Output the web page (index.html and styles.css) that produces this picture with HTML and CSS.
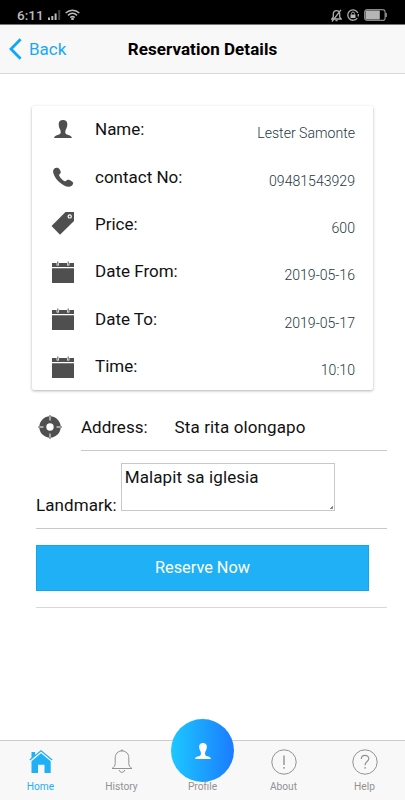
FILE: index.html
```
<!DOCTYPE html>
<html lang="en">
<head>
  <meta charset="UTF-8">
  <meta name="viewport" content="width=device-width, initial-scale=1.0">
  <title>Reservation Details</title>
  <link rel="stylesheet" href="styles.css">
</head>
<body>
  <svg class="defs" width="0" height="0">
    <symbol id="person" viewBox="0 0 18 18">
      <path d="M9 0C6.300 0 4.700 1.300 4.700 4c0 2 .500 4 1.400 5.400.700 1.100.800 3.200.300 4.100C5.500 15.300.600 14.700 0 18h18c-.600-3.300-5.500-2.700-6.400-4.500-.500-.900-.400-3 .300-4.100.900-1.400 1.400-3.400 1.400-5.400 0-2.700-1.600-4-4.300-4z"/>
    </symbol>
    <symbol id="calendar" viewBox="0 0 22 22">
      <path d="M0 2h4.600v2.500h2.400V2h8v2.500h2.400V2H22v4H0zM0 7.200h22V22H0zM5.300.500h1v3.300h-1zM15.700.500h1v3.300h-1z"/>
    </symbol>
  </svg>

  <div class="status">
    <div class="status-left">
      <span class="clock">6:11</span>
      <svg width="13" height="10" viewBox="0 0 13 10"><path fill="#bbb" d="M0 7.500h2V10H0zM3.300 6h2v4h-2zM6.600 3.500h2V10h-2z"/><path fill="#444" d="M10.200 0h2v10h-2z"/></svg>
      <svg width="15" height="11" viewBox="0 0 15 11" fill="none" stroke="#bbb" stroke-width="1.500"><path d="M.700 4c4-3.800 9.600-3.800 13.600 0M3 6.400c2.700-2.500 6.300-2.500 9 0M5.300 8.600c1.300-1.200 3.100-1.200 4.400 0"/><circle cx="7.500" cy="9.900" r=".6"/></svg>
    </div>
    <div class="status-right">
      <svg width="11" height="13" viewBox="0 0 11 13" fill="none" stroke="#aaa" stroke-width="1.300"><path d="M.800 10h9.400L8.700 8V5c0-2-1.200-3.400-3.200-3.400S2.300 3 2.300 5v3zM4.500 11.700h2M10 .800L1 12.500"/></svg>
      <svg width="12" height="12" viewBox="0 0 12 12" fill="none" stroke="#aaa" stroke-width="1.300"><path d="M10.300 9a5.200 5.200 0 1 1 .500-5M11.300 5v2.500M9.500 10L8 11"/><path fill="#bbb" stroke="none" d="M3.500 5.500h5V9h-5z"/><path stroke-width="1" d="M4.500 5.500V4.400c0-1.800 3-1.800 3 0v1.100"/></svg>
      <svg width="23" height="12" viewBox="0 0 23 12"><rect x=".6" y=".6" width="20.500" height="10.800" rx="2.500" fill="none" stroke="#888" stroke-width="1.200"/><path fill="#b5b5b5" d="M1.500 1.500h14.300v9H1.500zM21.500 4h1.200v4h-1.200z"/></svg>
    </div>
  </div>

  <header class="navbar">
    <a class="back">
      <svg width="13" height="22" viewBox="0 0 13 22"><path fill="none" stroke="#0fa8f8" stroke-width="2.800" d="M11.600 1.300L2 11l9.600 9.700"/></svg>
      <span>Back</span>
    </a>
    <h1>Reservation Details</h1>
  </header>

  <main class="content">
    <ul class="card">
      <li><svg class="ico person"><use href="#person"/></svg><span class="label">Name:</span><span class="value">Lester Samonte</span></li>
      <li><svg class="ico" viewBox="0 0 22 22"><path d="M5.600 1.800C3.300 1.200 1 3 1.100 5.500c.200 3.700 3.300 8 6.400 10.800 3.100 2.900 7.200 4.900 9.700 4.500 2.300-.300 4-1.800 4-3.700 0-1.500-3.900-3.600-5.400-3.300-1.300.200-1.600 1.800-2.800 1.500-1.900-.400-5.500-4-5.900-6-.200-1.300 1.500-1.500 1.700-2.800.100-1.200-1.500-4.300-3.200-4.700z"/></svg><span class="label">contact No:</span><span class="value">09481543929</span></li>
      <li><svg class="ico tag" viewBox="0 0 24 24"><path d="M14.500 1H23v9L9 23.700.500 15z"/><circle cx="18.700" cy="5.400" r="1.600" fill="none" stroke="#fff" stroke-width="1.200"/></svg><span class="label">Price:</span><span class="value">600</span></li>
      <li><svg class="ico"><use href="#calendar"/></svg><span class="label">Date From:</span><span class="value">2019-05-16</span></li>
      <li><svg class="ico"><use href="#calendar"/></svg><span class="label">Date To:</span><span class="value">2019-05-17</span></li>
      <li><svg class="ico"><use href="#calendar"/></svg><span class="label">Time:</span><span class="value">10:10</span></li>
    </ul>

    <div class="address">
      <svg width="24" height="24" viewBox="0 0 24 24"><circle cx="12" cy="12" r="7.200" fill="none" stroke="#4f4f4f" stroke-width="7"/><path stroke="#4f4f4f" d="M12 0v4M12 20v4M0 12h4M20 12h4"/><path stroke="#fff" d="M12 1.500v4M12 18.500v4M1.500 12h4M18.500 12h4"/></svg>
      <div class="address-row"><span>Address:</span><span class="place">Sta rita olongapo</span></div>
    </div>

    <div class="landmark">
      <label for="landmark">Landmark:</label>
      <textarea id="landmark">Malapit sa iglesia</textarea>
    </div>

    <div class="action">
      <button class="btn">Reserve Now</button>
    </div>
  </main>

  <nav class="tabs">
    <a class="tab active">
      <svg width="24" height="24" viewBox="0 0 24 24"><path fill="#1fb0f6" d="M12 4.200l9.700 8V24h-6.200v-8.200H9V24H2.500V12.200zM2.500 3h3.600v3.400L2.500 9.500z"/><path fill="none" stroke="#1fb0f6" stroke-width="1.200" d="M.800 11L12 1.700 23.200 11"/></svg>
      <span>Home</span>
    </a>
    <a class="tab">
      <svg width="24" height="24" viewBox="0 0 24 24" fill="none" stroke="#929292" stroke-width="1"><path d="M2 19.500h20c-2.200-1.400-3.200-2.700-3.200-5.200V9c0-4.100-2.600-7-6.800-7S5.200 4.900 5.200 9v5.300c0 2.500-1 3.800-3.200 5.200zM10.800 2c0-1.400 2.400-1.400 2.400 0M9.300 21c0 3 5.400 3 5.400 0"/></svg>
      <span>History</span>
    </a>
    <a class="tab profile">
      <span class="bubble"><svg><use href="#person"/></svg></span>
      <span class="name">Profile</span>
    </a>
    <a class="tab">
      <svg width="26" height="26" viewBox="0 0 26 26" fill="none" stroke="#929292" stroke-width="1"><circle cx="13" cy="13" r="12.200"/><path stroke-width="1.400" d="M13 6.500v9.500M13 18v1.700"/></svg>
      <span>About</span>
    </a>
    <a class="tab">
      <svg width="26" height="26" viewBox="0 0 26 26" fill="none" stroke="#929292" stroke-width="1"><circle cx="13" cy="13" r="12.200"/><path stroke-width="1.200" d="M9.300 10c0-4.800 7.500-4.700 7.500-.400 0 3-3.700 3-3.700 6.600M13.100 18v1.700"/></svg>
      <span>Help</span>
    </a>
  </nav>
</body>
</html>
```
FILE: styles.css
```
* { box-sizing: border-box; }
body { margin: 0; height: 100vh; display: flex; flex-direction: column;
       font-family: Roboto, sans-serif; font-size: 17px; color: #111; background: #fff; }
.defs { position: absolute; }

/* status bar */
.status { height: 25px; flex: none; display: flex; justify-content: space-between;
          padding: 6px 18px 0 17px; background: #000; border-bottom: 1px solid #777; }
.status-left, .status-right { display: flex; align-items: center; height: 18px; }
.status-left { gap: 4px; }
.status-right { gap: 5px; }
.clock { color: #bbb; font-size: 13.5px; font-weight: 500; line-height: 18px; }
.status-left svg { margin-bottom: 1px; }

/* header */
.navbar { height: 49px; flex: none; display: grid; grid-template-columns: 1fr auto 1fr;
          align-items: center; background: #f8f8f8; border-bottom: 1px solid #d8d8d8; }
.back { display: flex; align-items: center; gap: 7px; padding-left: 9px; color: #18a9f5; }
.navbar h1 { margin: 0; font-size: 17px; font-weight: 700; letter-spacing: .06px; color: #000; }

.content { flex: 1; }

/* details card */
.card { list-style: none; margin: 32px 32px 0; padding: 0; border-radius: 2px;
        box-shadow: 0 1px 3px rgba(0,0,0,.3); }
.card li { display: flex; align-items: center; height: 47.4px; padding: 0 18px 0 20px; }
.ico { width: 22px; height: 22px; fill: #4f4f4f; flex: none; }
.ico.person { width: 18px; height: 18px; margin: 0 2px 2px; }
.ico.tag { width: 24px; height: 24px; margin: 0 -1px 2px; }
.label { margin-left: 21px; padding-bottom: 1px; }
.value { margin-left: auto; padding-top: 7px; font-size: 14.1px; font-weight: 300; color: #263743; }

/* address and landmark */
.address { display: flex; align-items: center; height: 61px; margin: 0 18px 0 38px; }
.address svg { margin-top: 12px; }
.address-row { flex: 1; display: flex; gap: 27px; height: 61px; margin-left: 19px;
               padding-top: 27px; line-height: 20px; border-bottom: 1px solid #c8c7cc; }
.place { letter-spacing: .12px; }
.landmark { display: flex; align-items: flex-end; gap: 4px; height: 78px;
            margin: 0 18px 0 36px; padding-bottom: 17px; border-bottom: 1px solid #c8c7cc; }
.landmark label { line-height: 20px; margin-bottom: -4px; letter-spacing: .08px; }
.landmark textarea { width: 214px; height: 48px; padding: 2px 3px; resize: none;
                     border: 1px solid #c8c8c8; font: 17px/22px Roboto, sans-serif;
                     letter-spacing: .1px; color: #111;
                     background: linear-gradient(135deg, transparent 50%, #888 50%) right 1px bottom 1px / 3px 3px no-repeat #fff; }

.action { margin: 0 18px 0 36px; padding: 16px 18px 16px 0; border-bottom: 1px solid #d8d8d8; }
.btn { display: block; width: 100%; height: 46px; padding: 0 0 2px; border: 1px solid #0fa5ef;
       background: #1fb0f6; color: #fff; font: 16.3px Roboto, sans-serif; }

/* bottom tabs */
.tabs { height: 60px; flex: none; display: grid; grid-template-columns: repeat(5, 1fr);
        background: #f8f8f8; border-top: 1px solid #cbcbcb; }
.tab { position: relative; display: flex; flex-direction: column; align-items: center;
       justify-content: space-between; padding: 8px 0 7px; font-size: 10.2px; line-height: 12px; color: #929292; }
.tab.active { color: #1fb0f6; }
.tab.profile { justify-content: flex-end; }
.name { position: relative; }
.bubble { position: absolute; top: -22px; left: 9px; width: 63px; height: 63px; border-radius: 50%;
          display: flex; align-items: center; justify-content: center;
          background: linear-gradient(90deg, #1cc8ff, #1b7cff); }
.bubble svg { width: 16px; height: 16px; fill: #fff; }
```
